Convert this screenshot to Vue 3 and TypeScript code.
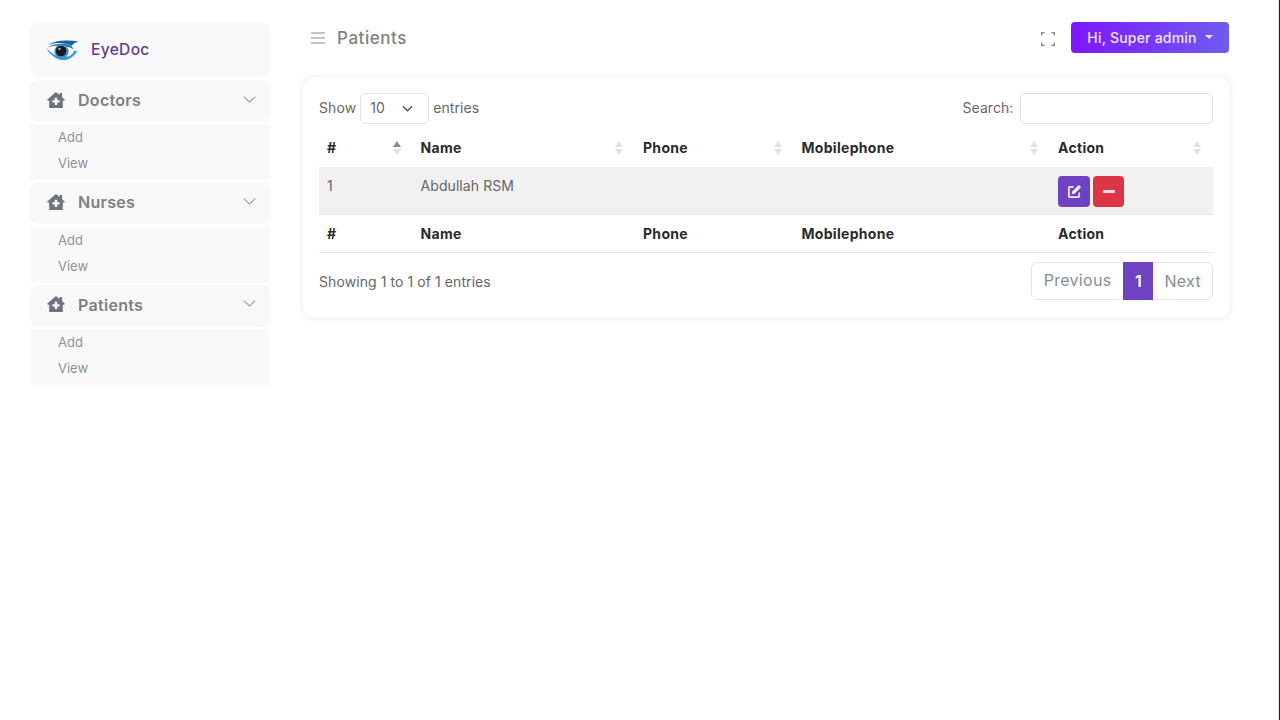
<script setup lang="ts">
const groups: string[] = ['Doctors', 'Nurses', 'Patients']
const cols = [
  { name: '#', w: 93.5, active: true },
  { name: 'Name', w: 222.5, active: false },
  { name: 'Phone', w: 158.5, active: false },
  { name: 'Mobilephone', w: 256.5, active: false },
  { name: 'Action', w: 163, active: false },
]
</script>

<template>
  <div class="page">
    <aside class="side">
      <div class="brand">
        <svg class="eye" viewBox="0 0 36 24" width="35" height="23">
          <path d="M3 6C10 1.500 22 .5 35 2.500 31 3.500 29 5 27.500 7 20 3.500 11 3.500 3 6Z" fill="#17629c" />
          <ellipse cx="16" cy="13" rx="13" ry="7.500" fill="#ffffff" />
          <path d="M1 9c4 8 11 13 18 13 6.500 0 11-4 14.500-9.500L35 13.500 30.500 12c-2 4.500-6 7-11 7C12 19 6 14.500 1 9Z" fill="#3a9bd5" />
          <path d="M3 8.500c7-4 17-4.500 24-1.500l3 4c-7-4.500-17-5-27-2.500Z" fill="#1f74ae" />
          <circle cx="17" cy="13" r="7.500" fill="#3f8fc4" />
          <circle cx="16.500" cy="12.500" r="5.500" fill="#15181d" />
          <circle cx="14.800" cy="10.500" r="1.300" fill="#a2abb5" />
        </svg>
        <span class="brand-name">EyeDoc</span>
      </div>
      <template v-for="g in groups" :key="g">
        <div class="group-head">
          <svg class="home" viewBox="0 0 18 16" width="18" height="16">
            <path fill-rule="evenodd" d="M9 0 12.500 3V1h2.600v4.300L18 7.800 16.800 9 15.800 8.200V16H2.200V8.200L1.200 9 0 7.800ZM7.800 5.800v2.400H5.400v2.300h2.400v2.400h2.400v-2.400h2.400V8.200h-2.400V5.800Z" fill="#6c757d" />
          </svg>
          <span class="group-name">{{ g }}</span>
          <svg class="chev" viewBox="0 0 13 7" width="13" height="7">
            <path d="M.7.7 6.500 6l5.800-5.300" fill="none" stroke="#9a9fa5" stroke-width="1.100" />
          </svg>
        </div>
        <div class="group-sub">
          <a>Add</a>
          <a>View</a>
        </div>
      </template>
    </aside>

    <main class="main">
      <header class="top">
        <div class="title">
          <svg viewBox="0 0 14 12" width="14" height="12">
            <path d="M0 1h14M0 6h14M0 11h14" stroke="#8a8a8a" stroke-width="1.200" />
          </svg>
          <span>Patients</span>
        </div>
        <div class="top-right">
          <svg class="expand" viewBox="0 0 14 14" width="14" height="14">
            <path d="M.7 3.500V.7h2.800M10.500.7h2.800v2.800M13.300 10.500v2.800h-2.800M3.500 13.300H.7v-2.800" fill="none" stroke="#8f8f8f" stroke-width="1.400" />
          </svg>
          <button class="user">Hi, Super admin<i class="caret"></i></button>
        </div>
      </header>

      <section class="card">
        <div class="controls">
          <div class="show">
            <span class="lift">Show</span>
            <div class="select">
              <span class="lift">10</span>
              <svg viewBox="0 0 12 7" width="11" height="7">
                <path d="M1 1l5 5 5-5" fill="none" stroke="#555" stroke-width="1.500" />
              </svg>
            </div>
            <span class="lift">entries</span>
          </div>
          <div class="search">
            <span class="lift">Search:</span>
            <div class="input"></div>
          </div>
        </div>

        <div class="row head">
          <div v-for="c in cols" :key="c.name" class="cell" :style="{ width: c.w + 'px' }">
            {{ c.name }}
            <svg class="sort" viewBox="0 0 8 14" width="8" height="14">
              <path d="M4 0l4 6H0Z" :fill="c.active ? '#8b8b8b' : '#e1e1e1'" />
              <path d="M4 14 0 8h8Z" fill="#e1e1e1" />
            </svg>
          </div>
        </div>
        <div class="row body">
          <div class="cell" :style="{ width: cols[0].w + 'px' }">1</div>
          <div class="cell" :style="{ width: cols[1].w + 'px' }">Abdullah RSM</div>
          <div class="cell" :style="{ width: cols[2].w + 'px' }"></div>
          <div class="cell" :style="{ width: cols[3].w + 'px' }"></div>
          <div class="cell actions" :style="{ width: cols[4].w + 'px' }">
            <button class="act edit" aria-label="Edit">
              <svg viewBox="0 0 16 16" width="15" height="15">
                <path d="M7 3H3a1 1 0 0 0-1 1v9a1 1 0 0 0 1 1h9a1 1 0 0 0 1-1V9" fill="none" stroke="#f3eefb" stroke-width="1.800" />
                <path d="M12.500 1 15 3.500 8 10.500l-3 .5.500-3Z" fill="#f3eefb" />
              </svg>
            </button>
            <button class="act del" aria-label="Delete">
              <i class="minus"></i>
            </button>
          </div>
        </div>
        <div class="row foot">
          <div v-for="c in cols" :key="c.name" class="cell" :style="{ width: c.w + 'px' }">{{ c.name }}</div>
        </div>

        <div class="bottom">
          <span>Showing 1 to 1 of 1 entries</span>
          <div class="pager">
            <span class="pg prev">Previous</span>
            <span class="pg current">1</span>
            <span class="pg next">Next</span>
          </div>
        </div>
      </section>
    </main>
    <div class="edge"></div>
  </div>
</template>

<style>
html, body { margin: 0; background: #fff; }
</style>

<style scoped>
.page {
  display: flex;
  box-sizing: border-box;
  width: 1280px;
  height: 720px;
  padding: 22px 0 0 30px;
  gap: 33.500px;
  overflow: hidden;
  font-family: Inter, "Open Sans", sans-serif;
  font-size: 14px;
  letter-spacing: .08px;
  color: #555;
}
.side { width: 239.500px; flex: none; display: flex; flex-direction: column; }
.brand {
  height: 55px;
  display: flex;
  align-items: center;
  gap: 11px;
  padding-left: 15px;
  background: #f8f8f9;
  border-radius: 10px;
  margin-bottom: 3px;
}
.eye { flex: none; margin-top: 1px; }
.brand-name { color: #5b3f8f; font-size: 15.500px; font-weight: 500; letter-spacing: .35px; padding-bottom: 1px; }
.group-head {
  height: 42px;
  display: flex;
  align-items: center;
  padding: 0 14px 0 17px;
  background: #f8f8f9;
  border-radius: 8px;
  margin-bottom: 2px;
}
.home { flex: none; margin: -3px 13px 0 0; }
.group-name { flex: 1; color: #7b8087; font-size: 16px; font-weight: 600; letter-spacing: .3px; padding-bottom: 2px; }
.chev { margin-top: -4px; }
.group-sub {
  height: 56.300px;
  box-sizing: border-box;
  display: flex;
  flex-direction: column;
  gap: 9px;
  padding: 5.300px 0 0 28px;
  background: #f9f9fa;
  margin-bottom: 2px;
  font-size: 13px;
  letter-spacing: 0;
  color: #8e9196;
  line-height: 17px;
}
.main { width: 927px; flex: none; }
.top { height: 55px; display: flex; align-items: flex-start; justify-content: space-between; }
.title {
  display: flex;
  align-items: center;
  gap: 12px;
  height: 32px;
  padding-left: 8px;
  font-size: 17px;
  font-weight: 500;
  letter-spacing: .55px;
  color: #80827f;
}
.top-right { display: flex; align-items: center; gap: 16px; padding-right: 1px; }
.expand { margin-top: 3px; }
.user {
  width: 158px;
  height: 30.500px;
  border: 0;
  border-radius: 4px;
  background: linear-gradient(90deg, #7e16fc, #6f5cf0);
  color: #f1e7ff;
  font: 500 14px Inter, sans-serif;
  letter-spacing: .2px;
  display: flex;
  align-items: center;
  justify-content: center;
  padding: 0;
}
.caret {
  width: 0;
  height: 0;
  margin-left: 8px;
  border: 4.500px solid transparent;
  border-top-color: #efe6ff;
  border-bottom: 0;
}
.card {
  box-sizing: border-box;
  height: 241px;
  padding: 16px 17px 0 16px;
  background: #fff;
  border-radius: 12px;
  box-shadow: 0 0 7px rgba(0, 0, 0, .1);
}
.controls { display: flex; align-items: center; justify-content: space-between; height: 31px; }
.lift { padding-bottom: 2px; }
.show, .search { display: flex; align-items: center; gap: 4px; color: #666; }
.search { gap: 6px; }
.select {
  box-sizing: border-box;
  width: 69px;
  height: 31px;
  display: flex;
  align-items: center;
  justify-content: space-between;
  padding: 0 15px 0 9px;
  border: 1px solid #e3e3e3;
  border-radius: 5px;
}
.input { box-sizing: border-box; width: 193.500px; height: 31px; border: 1px solid #e1e1e1; border-radius: 5px; }
.row { display: flex; }
.cell { box-sizing: border-box; padding: 0 8px; position: relative; flex: none; }
.head { height: 39px; padding-top: 4px; align-items: center; font-weight: 700; letter-spacing: .3px; color: #2b2b2b; box-sizing: content-box; }
.sort { position: absolute; right: 12px; top: 50%; margin-top: -7px; }
.body { height: 48px; background: #f1f1f1; border-bottom: 1px solid #e4e4e4; box-sizing: border-box; padding-top: 10px; color: #666; }
.actions { display: flex; gap: 3px; align-items: flex-start; padding-top: 0; margin-top: -1px; }
.act {
  height: 30.500px;
  border: 0;
  border-radius: 4px;
  padding: 0;
  display: flex;
  align-items: center;
  justify-content: center;
}
.edit { width: 32px; background: #6f42c1; }
.del { width: 31px; background: #dc3545; }
.minus { width: 12px; height: 2.500px; background: #fbe3e5; border-radius: 1px; }
.foot { height: 37px; align-items: center; font-weight: 700; letter-spacing: .3px; color: #2b2b2b; border-bottom: 1px solid #e4e4e4; box-sizing: content-box; }
.bottom { display: flex; align-items: center; justify-content: space-between; margin-top: 9px; color: #666; }
.pager {
  display: flex;
  height: 38px;
  box-sizing: border-box;
  border: 1px solid #e4e4e4;
  border-radius: 6px;
  font-size: 16px;
  letter-spacing: .3px;
  color: #868e96;
}
.pg { display: flex; align-items: center; padding: 0 12px; }
.prev { padding-bottom: 2px; }
.next { padding: 0 11px; }
.current { background: #6f42c1; color: #fff; padding: 0 11.500px; margin: -1px 0; font-weight: 600; }
.edge { position: absolute; right: 0; top: 0; width: 1px; height: 720px; background: #1c2340; border-left: 1px solid #e2e2e2; }
</style>
